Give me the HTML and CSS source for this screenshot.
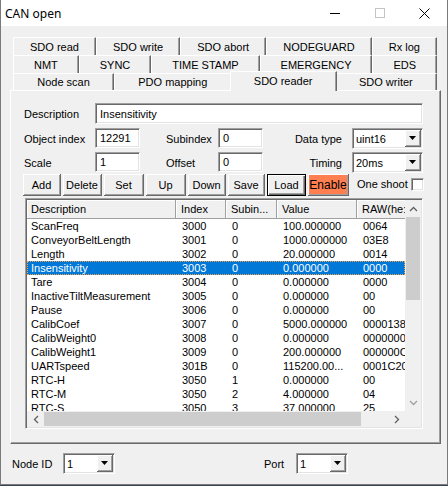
FILE: index.html
```html
<!DOCTYPE html>
<html lang="en">
<head>
  <meta charset="UTF-8">
  <title>CAN open</title>
  <link rel="stylesheet" href="styles.css">
</head>
<body>

  <div class="window">
    <div class="titlebar">
      <span class="title">CAN open</span>
      <span class="cap-btn">
        <svg width="10" height="10"><line x1="0" y1="5.5" x2="10" y2="5.5" stroke="#000" stroke-width="1"/></svg>
      </span>
      <span class="cap-btn">
        <svg width="10" height="10"><rect x="0.5" y="0.5" width="9" height="9" fill="none" stroke="#c4c4c4"/></svg>
      </span>
      <span class="cap-btn">
        <svg width="11" height="11"><path d="M0.5 0.5 L10.5 10.5 M10.5 0.5 L0.5 10.5" stroke="#000" stroke-width="1"/></svg>
      </span>
    </div>

    <div class="client">
      <!-- tab strip, 3 rows -->
      <div class="tabs">
        <div class="tab-row">
          <div class="tab">SDO read</div>
          <div class="tab">SDO write</div>
          <div class="tab">SDO abort</div>
          <div class="tab">NODEGUARD</div>
          <div class="tab">Rx log</div>
        </div>
        <div class="tab-row">
          <div class="tab">NMT</div>
          <div class="tab">SYNC</div>
          <div class="tab">TIME STAMP</div>
          <div class="tab">EMERGENCY</div>
          <div class="tab">EDS</div>
        </div>
        <div class="tab-row front">
          <div class="tab">Node scan</div>
          <div class="tab">PDO mapping</div>
          <div class="tab active">SDO reader</div>
          <div class="tab">SDO writer</div>
        </div>
      </div>

      <div class="panel">
        <div class="row-desc">
          <span>Description</span>
          <div class="field">Insensitivity</div>
        </div>

        <div class="row-grid">
          <span class="lbl">Object index</span>
          <div class="field small">12291</div>
          <span class="lbl pad">Subindex</span>
          <div class="field small">0</div>
          <span class="lbl right">Data type</span>
          <div class="combo">
            <span class="combo-text">uint16</span>
            <span class="combo-btn"><svg width="7" height="4"><polygon points="0,0 7,0 3.5,4" fill="#000"/></svg></span>
          </div>
        </div>

        <div class="row-grid second">
          <span class="lbl">Scale</span>
          <div class="field small">1</div>
          <span class="lbl pad">Offset</span>
          <div class="field small">0</div>
          <span class="lbl right">Timing</span>
          <div class="combo">
            <span class="combo-text">20ms</span>
            <span class="combo-btn"><svg width="7" height="4"><polygon points="0,0 7,0 3.5,4" fill="#000"/></svg></span>
          </div>
        </div>

        <div class="btn-row">
          <button class="btn">Add</button>
          <button class="btn">Delete</button>
          <button class="btn">Set</button>
          <button class="btn">Up</button>
          <button class="btn">Down</button>
          <button class="btn">Save</button>
          <button class="btn default">Load</button>
          <button class="btn enable">Enable</button>
          <div class="oneshot">
            <span>One shoot</span>
            <span class="checkbox"></span>
          </div>
        </div>

        <div class="list">
          <div class="list-main">
            <div class="lv-header">
              <div>Description</div>
              <div>Index</div>
              <div>Subin...</div>
              <div>Value</div>
              <div>RAW(he:</div>
            </div>
            <div class="lv-row"><span>ScanFreq</span><span>3000</span><span>0</span><span>100.000000</span><span>0064</span></div>
            <div class="lv-row"><span>ConveyorBeltLength</span><span>3001</span><span>0</span><span>1000.000000</span><span>03E8</span></div>
            <div class="lv-row"><span>Length</span><span>3002</span><span>0</span><span>20.000000</span><span>0014</span></div>
            <div class="lv-row selected"><span>Insensitivity</span><span>3003</span><span>0</span><span>0.000000</span><span>0000</span></div>
            <div class="lv-row"><span>Tare</span><span>3004</span><span>0</span><span>0.000000</span><span>0000</span></div>
            <div class="lv-row"><span>InactiveTiltMeasurement</span><span>3005</span><span>0</span><span>0.000000</span><span>00</span></div>
            <div class="lv-row"><span>Pause</span><span>3006</span><span>0</span><span>0.000000</span><span>00</span></div>
            <div class="lv-row"><span>CalibCoef</span><span>3007</span><span>0</span><span>5000.000000</span><span>0000138</span></div>
            <div class="lv-row"><span>CalibWeight0</span><span>3008</span><span>0</span><span>0.000000</span><span>0000000</span></div>
            <div class="lv-row"><span>CalibWeight1</span><span>3009</span><span>0</span><span>200.000000</span><span>000000C</span></div>
            <div class="lv-row"><span>UARTspeed</span><span>301B</span><span>0</span><span>115200.00...</span><span>0001C20</span></div>
            <div class="lv-row"><span>RTC-H</span><span>3050</span><span>1</span><span>0.000000</span><span>00</span></div>
            <div class="lv-row"><span>RTC-M</span><span>3050</span><span>2</span><span>4.000000</span><span>04</span></div>
            <div class="lv-row"><span>RTC-S</span><span>3050</span><span>3</span><span>37.000000</span><span>25</span></div>
          </div>

          <div class="vscroll">
            <span class="sb-arrow"><svg width="9" height="6"><polyline points="1,5 4.5,1.5 8,5" fill="none" stroke="#606060" stroke-width="1.3"/></svg></span>
            <span class="vthumb"></span>
            <span class="sb-track"></span>
            <span class="sb-arrow"><svg width="9" height="6"><polyline points="1,1 4.5,4.5 8,1" fill="none" stroke="#a0a0a0" stroke-width="1.3"/></svg></span>
          </div>

          <div class="hscroll">
            <span class="sb-arrow h"><svg width="6" height="9"><polyline points="5,1 1.5,4.5 5,8" fill="none" stroke="#606060" stroke-width="1.3"/></svg></span>
            <span class="hthumb"></span>
            <span class="sb-track"></span>
            <span class="sb-arrow h"><svg width="6" height="9"><polyline points="1,1 4.5,4.5 1,8" fill="none" stroke="#606060" stroke-width="1.3"/></svg></span>
          </div>
          <div class="sb-corner"></div>
        </div>
      </div>

      <div class="footer">
        <span class="foot-lbl">Node ID</span>
        <div class="combo foot">
          <span class="combo-text">1</span>
          <span class="combo-btn"><svg width="7" height="4"><polygon points="0,0 7,0 3.5,4" fill="#000"/></svg></span>
        </div>
        <span class="foot-lbl port">Port</span>
        <div class="combo foot">
          <span class="combo-text">1</span>
          <span class="combo-btn"><svg width="7" height="4"><polygon points="0,0 7,0 3.5,4" fill="#000"/></svg></span>
        </div>
      </div>
    </div>
  </div>

</body>
</html>
```

FILE: styles.css
```css
* {
  box-sizing: border-box;
}
body {
  margin: 0;
  background-color: #3b4452;
  font: 11px "Liberation Sans", Arial, sans-serif;
  color: #000;
}
.window {
  width: 448px;
  height: 485px;
  background-color: #f0f0f0;
  border: 1px solid #7a7a7a;
  border-top: none;
  display: flex;
  flex-direction: column;
}
.titlebar {
  height: 26px;
  background-color: #fff;
  display: flex;
  align-items: center;
}
.title {
  flex: 1;
  padding-left: 4px;
  font: 12px "Noto Sans", sans-serif;
}
.cap-btn {
  width: 45px;
  height: 26px;
  display: flex;
  align-items: center;
  justify-content: center;
}
.client {
  flex: 1;
  padding-top: 11px;
}

/* tabs */
.tabs {
  margin-left: 12px;
  width: 424px;
}
.tab-row {
  display: flex;
  height: 18px;
}
.tab-row.front {
  height: 17px;
}
.tab {
  flex: 1 1 auto;
  display: flex;
  align-items: center;
  justify-content: center;
  white-space: nowrap;
  background-color: #f0f0f0;
  border-top: 1px solid #fff;
  border-left: 1px solid #fff;
  border-right: 1px solid #696969;
  box-shadow: inset -1px 0 #a0a0a0;
}
.tab.active {
  position: relative;
  z-index: 1;
  height: 20px;
  margin: -2px -2px -1px -2px;
  padding-bottom: 2px;
}

/* panel */
.panel {
  margin-left: 9px;
  width: 431px;
  height: 354px;
  padding: 12px 0 0 13px;
  border-top: 1px solid #fff;
  border-left: 1px solid #fff;
  border-right: 1px solid #696969;
  border-bottom: 1px solid #696969;
  box-shadow: inset -1px -1px #a0a0a0;
}
.row-desc {
  display: grid;
  grid-template-columns: 71px 328px;
  align-items: center;
  height: 21px;
}
.row-grid {
  display: grid;
  grid-template-columns: 71px 45px 78px 45px 89px 71px;
  align-items: start;
  height: 21px;
  margin-top: 4px;
}
.row-grid.second {
  margin-top: 3px;
}
.lbl {
  align-self: center;
  white-space: nowrap;
}
.lbl.pad {
  padding-left: 26px;
}
.lbl.right {
  text-align: right;
  padding-right: 10px;
}
.field {
  height: 21px;
  background-color: #fff;
  border-top: 1px solid #a0a0a0;
  border-left: 1px solid #a0a0a0;
  border-right: 1px solid #fff;
  border-bottom: 1px solid #fff;
  box-shadow: inset 1px 1px #696969, inset -1px -1px #e3e3e3;
  padding-left: 4px;
  display: flex;
  align-items: center;
}
.field.small {
  height: 20px;
}
.combo {
  height: 21px;
  display: flex;
  background-color: #fff;
  border-top: 1px solid #a0a0a0;
  border-left: 1px solid #a0a0a0;
  border-right: 1px solid #fff;
  border-bottom: 1px solid #fff;
  box-shadow: inset 1px 1px #696969, inset -1px -1px #e3e3e3;
  padding: 1px;
}
.combo-text {
  flex: 1;
  display: flex;
  align-items: center;
  padding-left: 2px;
}
.combo-btn {
  width: 16px;
  display: flex;
  align-items: center;
  justify-content: center;
  background-color: #f0f0f0;
  border-right: 1px solid #696969;
  border-bottom: 1px solid #696969;
  box-shadow: inset 1px 1px #fff, inset -1px -1px #a0a0a0;
}

/* buttons */
.btn-row {
  display: grid;
  grid-template-columns: 38px 39px 40px 40px 38px 37px 39px 41px auto;
  column-gap: 2px;
  height: 22px;
  margin: 1px 0 0 -1px;
}
.btn {
  height: 22px;
  padding: 0;
  font: 11px "Liberation Sans", Arial, sans-serif;
  color: #000;
  background-color: #f0f0f0;
  border: none;
  border-right: 1px solid #696969;
  border-bottom: 1px solid #696969;
  box-shadow: inset 1px 1px #fff, inset -1px -1px #a0a0a0;
}
.btn.default {
  border: 1px solid #000;
  box-shadow: inset 1px 1px #fff, inset -1px -1px #696969, inset -2px -2px #a0a0a0;
}
.btn.enable {
  background-color: #ff7f50;
  font-size: 12px;
}
.oneshot {
  display: flex;
  align-items: center;
  height: 16px;
  margin-top: 2px;
  padding-left: 6px;
}
.checkbox {
  width: 13px;
  height: 13px;
  margin-left: 3px;
  background-color: #fff;
  border-top: 1px solid #a0a0a0;
  border-left: 1px solid #a0a0a0;
  border-right: 1px solid #fff;
  border-bottom: 1px solid #fff;
  box-shadow: inset 1px 1px #696969, inset -1px -1px #e3e3e3;
}

/* list view */
.list {
  margin: 2px 0 0 1px;
  width: 398px;
  height: 231px;
  display: grid;
  grid-template-columns: 1fr 16px;
  grid-template-rows: 1fr 16px;
  background-color: #fff;
  border-top: 1px solid #a0a0a0;
  border-left: 1px solid #a0a0a0;
  border-right: 1px solid #fff;
  border-bottom: 1px solid #fff;
  box-shadow: inset 1px 1px #696969, inset -1px -1px #e3e3e3;
  padding: 1px;
}
.list-main {
  overflow: hidden;
  background-color: #fff;
}
.lv-header, .lv-row {
  display: grid;
  grid-template-columns: 149px 50px 51px 80px 48px;
}
.lv-header {
  height: 19px;
}
.lv-header div {
  display: flex;
  align-items: center;
  padding-left: 5px;
  white-space: nowrap;
  overflow: hidden;
  background-color: #f0f0f0;
  border-right: 1px solid #a0a0a0;
  border-bottom: 1px solid #a0a0a0;
  box-shadow: inset 1px 1px #fff;
}
.lv-header div:first-child {
  padding-left: 4px;
}
.lv-header div:last-child {
  border-right: none;
}
.lv-row {
  height: 14px;
  line-height: 14px;
}
.lv-row span {
  padding-left: 6px;
  white-space: nowrap;
  overflow: hidden;
}
.lv-row span:first-child {
  padding-left: 4px;
}
.lv-row.selected {
  background-color: #0078d7;
  color: #fff;
  outline: 1px dotted #f7a04a;
  outline-offset: -1px;
}

/* scroll bars */
.vscroll {
  grid-row: 1;
  grid-column: 2;
  display: flex;
  flex-direction: column;
  background-color: #f0f0f0;
}
.hscroll {
  grid-row: 2;
  grid-column: 1;
  display: flex;
  background-color: #f0f0f0;
}
.sb-corner {
  background-color: #f0f0f0;
}
.sb-arrow {
  height: 17px;
  display: flex;
  align-items: center;
  justify-content: center;
}
.sb-arrow.h {
  width: 17px;
  height: 16px;
}
.sb-track {
  flex: 1;
}
.vthumb {
  height: 83px;
  margin: 0 1px;
  background-color: #cdcdcd;
}
.hthumb {
  width: 317px;
  margin: 1px 0;
  background-color: #cdcdcd;
}

/* footer */
.footer {
  display: flex;
  align-items: center;
  height: 21px;
  margin: 9px 0 0 11px;
}
.foot-lbl {
  width: 51px;
}
.foot-lbl.port {
  width: 32px;
  margin-left: 149px;
}
.combo.foot {
  width: 52px;
}
```
